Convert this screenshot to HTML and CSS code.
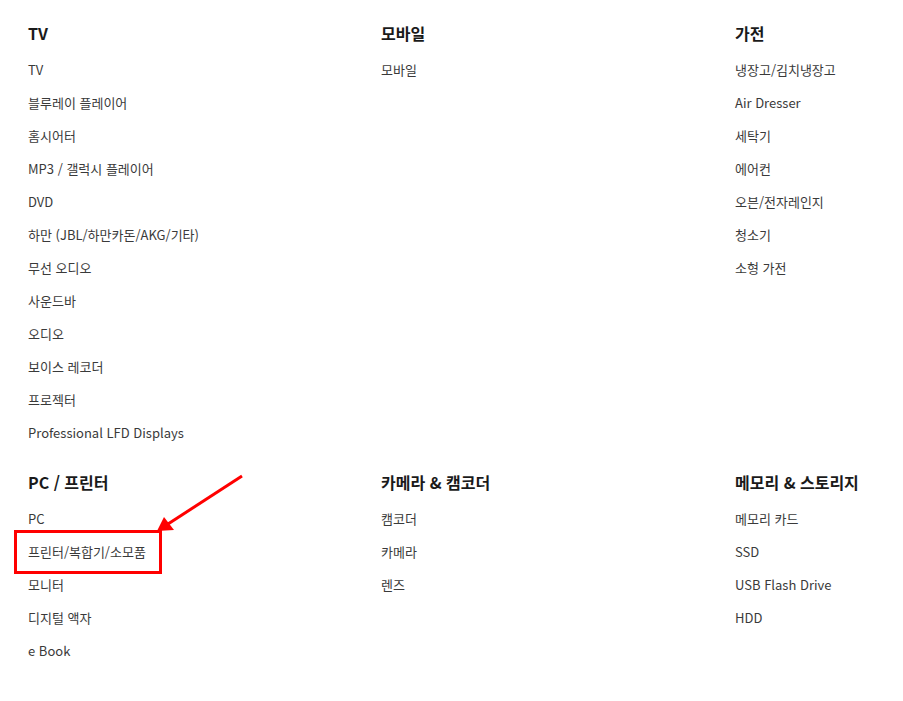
FILE: index.html
```html
<!DOCTYPE html>
<html lang="ko">
<head>
  <meta charset="UTF-8">
  <title>제품 카테고리</title>
  <link rel="stylesheet" href="styles.css">
</head>
<body>

  <div class="categories">
    <!-- TV -->
    <section class="group">
      <h2>TV</h2>
      <ul>
        <li>TV</li>
        <li>블루레이 플레이어</li>
        <li>홈시어터</li>
        <li>MP3 / 갤럭시 플레이어</li>
        <li>DVD</li>
        <li>하만 (JBL/하만카돈/AKG/기타)</li>
        <li>무선 오디오</li>
        <li>사운드바</li>
        <li>오디오</li>
        <li>보이스 레코더</li>
        <li>프로젝터</li>
        <li>Professional LFD Displays</li>
      </ul>
    </section>

    <section class="group">
      <h2>모바일</h2>
      <ul>
        <li>모바일</li>
      </ul>
    </section>

    <section class="group">
      <h2>가전</h2>
      <ul>
        <li>냉장고/김치냉장고</li>
        <li>Air Dresser</li>
        <li>세탁기</li>
        <li>에어컨</li>
        <li>오븐/전자레인지</li>
        <li>청소기</li>
        <li>소형 가전</li>
      </ul>
    </section>

    <section class="group">
      <h2>PC / 프린터</h2>
      <ul>
        <li>PC</li>
        <li>프린터/복합기/소모품</li>
        <li>모니터</li>
        <li>디지털 액자</li>
        <li>e Book</li>
      </ul>
    </section>

    <section class="group">
      <h2>카메라 &amp; 캠코더</h2>
      <ul>
        <li>캠코더</li>
        <li>카메라</li>
        <li>렌즈</li>
      </ul>
    </section>

    <section class="group">
      <h2>메모리 &amp; 스토리지</h2>
      <ul>
        <li>메모리 카드</li>
        <li>SSD</li>
        <li>USB Flash Drive</li>
        <li>HDD</li>
      </ul>
    </section>
  </div>

  <!-- Annotation: highlight the printer item -->
  <svg class="annotation" width="903" height="701" viewBox="0 0 903 701">
    <rect x="15.5" y="531.5" width="145" height="41" fill="none" stroke="#ff0000" stroke-width="3"/>
    <line x1="242" y1="476" x2="168" y2="524" stroke="#ff0000" stroke-width="3"/>
    <polygon points="157,531 164,517 174,530" fill="#ff0000"/>
  </svg>

</body>
</html>
```

FILE: styles.css
```css
body {
  margin: 0;
  font-family: "Noto Sans CJK KR", "Noto Sans", sans-serif;
  color: #333;
  background: #fff;
}

.categories {
  display: grid;
  grid-template-columns: 353px 354px 1fr;
  row-gap: 21px;
  padding: 21px 0 0 28px;
}

.group h2 {
  margin: 0 0 8px;
  font-size: 16px;
  line-height: 24px;
  font-weight: 700;
  color: #1a1a1a;
}

.group ul {
  list-style: none;
  margin: 0;
  padding: 0;
}

.group li {
  font-size: 13px;
  line-height: 33px;
  color: #3a3a3a;
}

.annotation {
  position: absolute;
  left: 0;
  top: 0;
  pointer-events: none;
}
```
